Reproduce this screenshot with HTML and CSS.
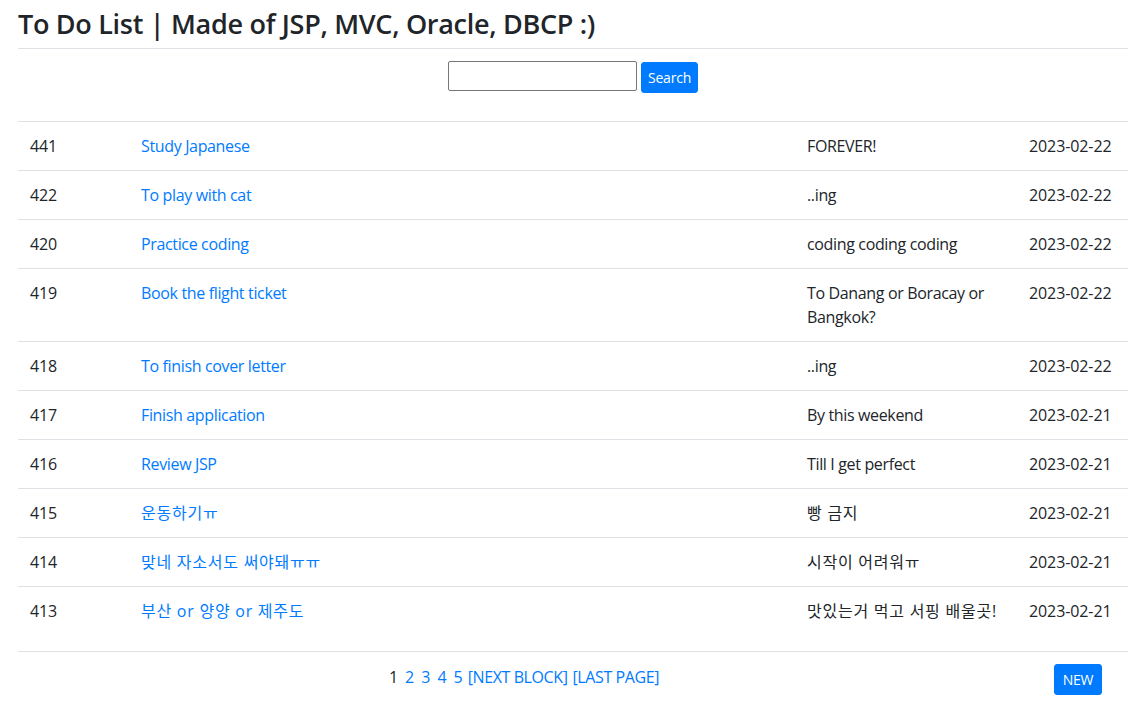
FILE: index.html
```html
<!DOCTYPE html>
<html>
<head>
<meta charset="utf-8">
<title>To Do List</title>
<link rel="stylesheet" href="styles.css">
</head>
<body>
<div class="wrap">
  <h3 class="title">To Do List | Made of JSP, MVC, Oracle, DBCP :)</h3>
  <form class="search">
    <input type="text" class="search-input">
    <button type="button" class="btn">Search</button>
  </form>
  <table class="list">
    <colgroup>
      <col class="c-no"><col class="c-title"><col class="c-content"><col class="c-date">
    </colgroup>
    <tbody>
      <tr><td class="num">441</td><td><a href="#">Study Japanese</a></td><td>FOREVER!</td><td class="num">2023-02-22</td></tr>
      <tr><td class="num">422</td><td><a href="#">To play with cat</a></td><td>..ing</td><td class="num">2023-02-22</td></tr>
      <tr><td class="num">420</td><td><a href="#">Practice coding</a></td><td>coding coding coding</td><td class="num">2023-02-22</td></tr>
      <tr><td class="num">419</td><td><a href="#">Book the flight ticket</a></td><td>To Danang or Boracay or Bangkok?</td><td class="num">2023-02-22</td></tr>
      <tr><td class="num">418</td><td><a href="#">To finish cover letter</a></td><td>..ing</td><td class="num">2023-02-22</td></tr>
      <tr><td class="num">417</td><td><a href="#">Finish application</a></td><td>By this weekend</td><td class="num">2023-02-21</td></tr>
      <tr><td class="num">416</td><td><a href="#">Review JSP</a></td><td>Till I get perfect</td><td class="num">2023-02-21</td></tr>
      <tr><td class="num">415</td><td><a href="#" class="ko">운동하기ㅠ</a></td><td class="ko">빵 금지</td><td class="num">2023-02-21</td></tr>
      <tr><td class="num">414</td><td><a href="#" class="ko">맞네 자소서도 써야돼ㅠㅠ</a></td><td class="ko">시작이 어려워ㅠ</td><td class="num">2023-02-21</td></tr>
      <tr><td class="num">413</td><td><a href="#" class="ko">부산 or 양양 or 제주도</a></td><td class="ko">맛있는거 먹고 서핑 배울곳!</td><td class="num">2023-02-21</td></tr>
    </tbody>
  </table>
  <div class="footer">
    <div class="pages">
      <span class="cur">1</span>
      <a href="#">2</a>
      <a href="#">3</a>
      <a href="#">4</a>
      <a href="#">5</a>
      <a href="#" class="tail">[NEXT BLOCK]</a>
      <a href="#" class="tail">[LAST PAGE]</a>
    </div>
    <div class="actions">
      <button type="button" class="btn">NEW</button>
    </div>
  </div>
</div>
</body>
</html>
```
FILE: styles.css
```css
html, body {
  margin: 0;
  padding: 0;
  background: #fff;
}
body {
  font-family: "Open Sans", "Noto Sans CJK KR", sans-serif;
  font-size: 16px;
  line-height: 24px;
  color: #212529;
}
.wrap {
  width: 1110px;
  margin: 0 0 0 18px;
  padding-top: 6px;
}
.title {
  margin: 0;
  font-size: 27px;
  font-weight: 600;
  line-height: 36px;
  padding-bottom: 6px;
  border-bottom: 1px solid #dee2e6;
  letter-spacing: -0.3px;
}
.search {
  display: flex;
  justify-content: center;
  align-items: flex-start;
  gap: 4px;
  padding-top: 12px;
  height: 60px;
  box-sizing: border-box;
  margin-bottom: 12px;
}
.search-input {
  width: 189px;
  height: 30px;
  box-sizing: border-box;
  border: 1px solid #767676;
  border-radius: 2px;
  margin: 0;
  padding: 1px 2px;
}
.btn {
  font-family: "Open Sans", sans-serif;
  background: #007bff;
  color: #fff;
  border: 1px solid #007bff;
  border-radius: 3px;
  font-size: 14px;
  line-height: 21px;
  padding: 4px 6px;
  margin: 0;
  margin-top: 1px;
  letter-spacing: -0.2px;
}
.list {
  width: 1110px;
  border-collapse: collapse;
  table-layout: fixed;
}
.c-no { width: 111px; }
.c-title { width: 666px; }
.c-content { width: 222px; }
.c-date { width: 111px; }
.list td {
  padding: 12px;
  border-top: 1px solid #dee2e6;
  vertical-align: top;
  word-wrap: break-word;
  letter-spacing: -0.35px;
}
.list td.num { letter-spacing: -0.1px; }
.list td.ko, .list a.ko { letter-spacing: 0.75px; }
.list a {
  color: #007bff;
  text-decoration: none;
}
.footer {
  display: flex;
  align-items: flex-start;
  margin-top: 16px;
  border-top: 1px solid #dee2e6;
  padding-top: 12px;
}
.pages {
  flex: 1;
  display: flex;
  justify-content: center;
  gap: 7px;
  padding-top: 1px;
  padding-left: 2px;
}
.pages a {
  color: #007bff;
  text-decoration: none;
}
.pages a.tail {
  letter-spacing: -0.4px;
  margin-left: -2px;
}
.pages .cur { color: #212529; }
.actions {
  width: 100px;
  display: flex;
  justify-content: center;
}
.actions .btn {
  margin-top: 0;
  padding: 4px 8px;
}
```
